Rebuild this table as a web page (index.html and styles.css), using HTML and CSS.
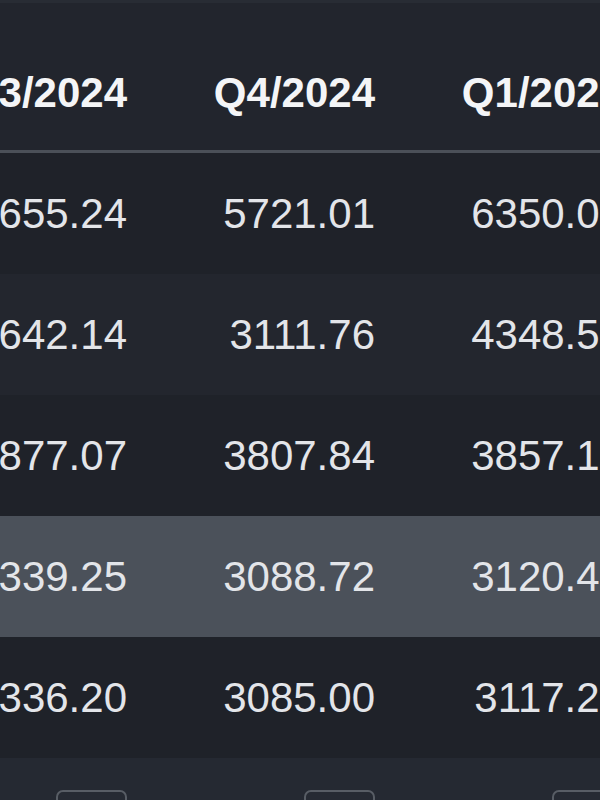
FILE: index.html
```html
<!DOCTYPE html>
<html lang="en">
<head>
<meta charset="utf-8">
<title>Quarterly table</title>
<link rel="stylesheet" href="styles.css">
</head>
<body>
<div class="viewport">
  <table class="grid">
    <colgroup><col class="c"><col class="c"><col class="c"></colgroup>
    <thead>
      <tr><th>Q3/2024</th><th>Q4/2024</th><th>Q1/2025</th></tr>
    </thead>
    <tbody>
      <tr class="odd"><td>3655.24</td><td>5721.01</td><td>6350.00</td></tr>
      <tr class="even"><td>3642.14</td><td>3111.76</td><td>4348.50</td></tr>
      <tr class="odd"><td>3877.07</td><td>3807.84</td><td>3857.10</td></tr>
      <tr class="hover"><td>3339.25</td><td>3088.72</td><td>3120.40</td></tr>
      <tr class="odd"><td>3336.20</td><td>3085.00</td><td>3117.20</td></tr>
    </tbody>
    <tfoot>
      <tr><td><span class="box"></span></td><td><span class="box"></span></td><td><span class="box"></span></td></tr>
    </tfoot>
  </table>
</div>
</body>
</html>
```
FILE: styles.css
```css
html, body {
  margin: 0;
  padding: 0;
  background: #22252d;
}
.viewport {
  width: 600px;
  height: 800px;
  overflow: hidden;
  background: #22252d;
  border-top: 3px solid #282c34;
  box-sizing: border-box;
}
.grid {
  margin-left: -121px;
  border-collapse: collapse;
  table-layout: fixed;
  width: 744px;
  font-family: "Liberation Sans", Arial, sans-serif;
  font-size: 42px;
  line-height: 48px;
}
.c { width: 248px; }
.grid th, .grid td {
  text-align: right;
  padding: 0 0 0 24px;
  white-space: nowrap;
}
.grid thead th {
  color: #f4f5f7;
  font-weight: 700;
  padding-top: 66px;
  padding-bottom: 33px;
  background: #22252d;
  border-bottom: 3px solid #4b5058;
}
.grid tbody td {
  color: #e3e5e9;
  padding-top: 37px;
  padding-bottom: 36px;
}
.odd td { background: #1f2229; }
.even td { background: #23262e; }
.hover td { background: #4b515a; }
.grid tfoot td {
  background: #252932;
  padding-top: 32px;
  height: 60px;
  vertical-align: top;
}
.box {
  display: inline-block;
  width: 67px;
  height: 40px;
  border: 2px solid #585d65;
  border-radius: 7px;
  background: #262a33;
  vertical-align: top;
}
```
